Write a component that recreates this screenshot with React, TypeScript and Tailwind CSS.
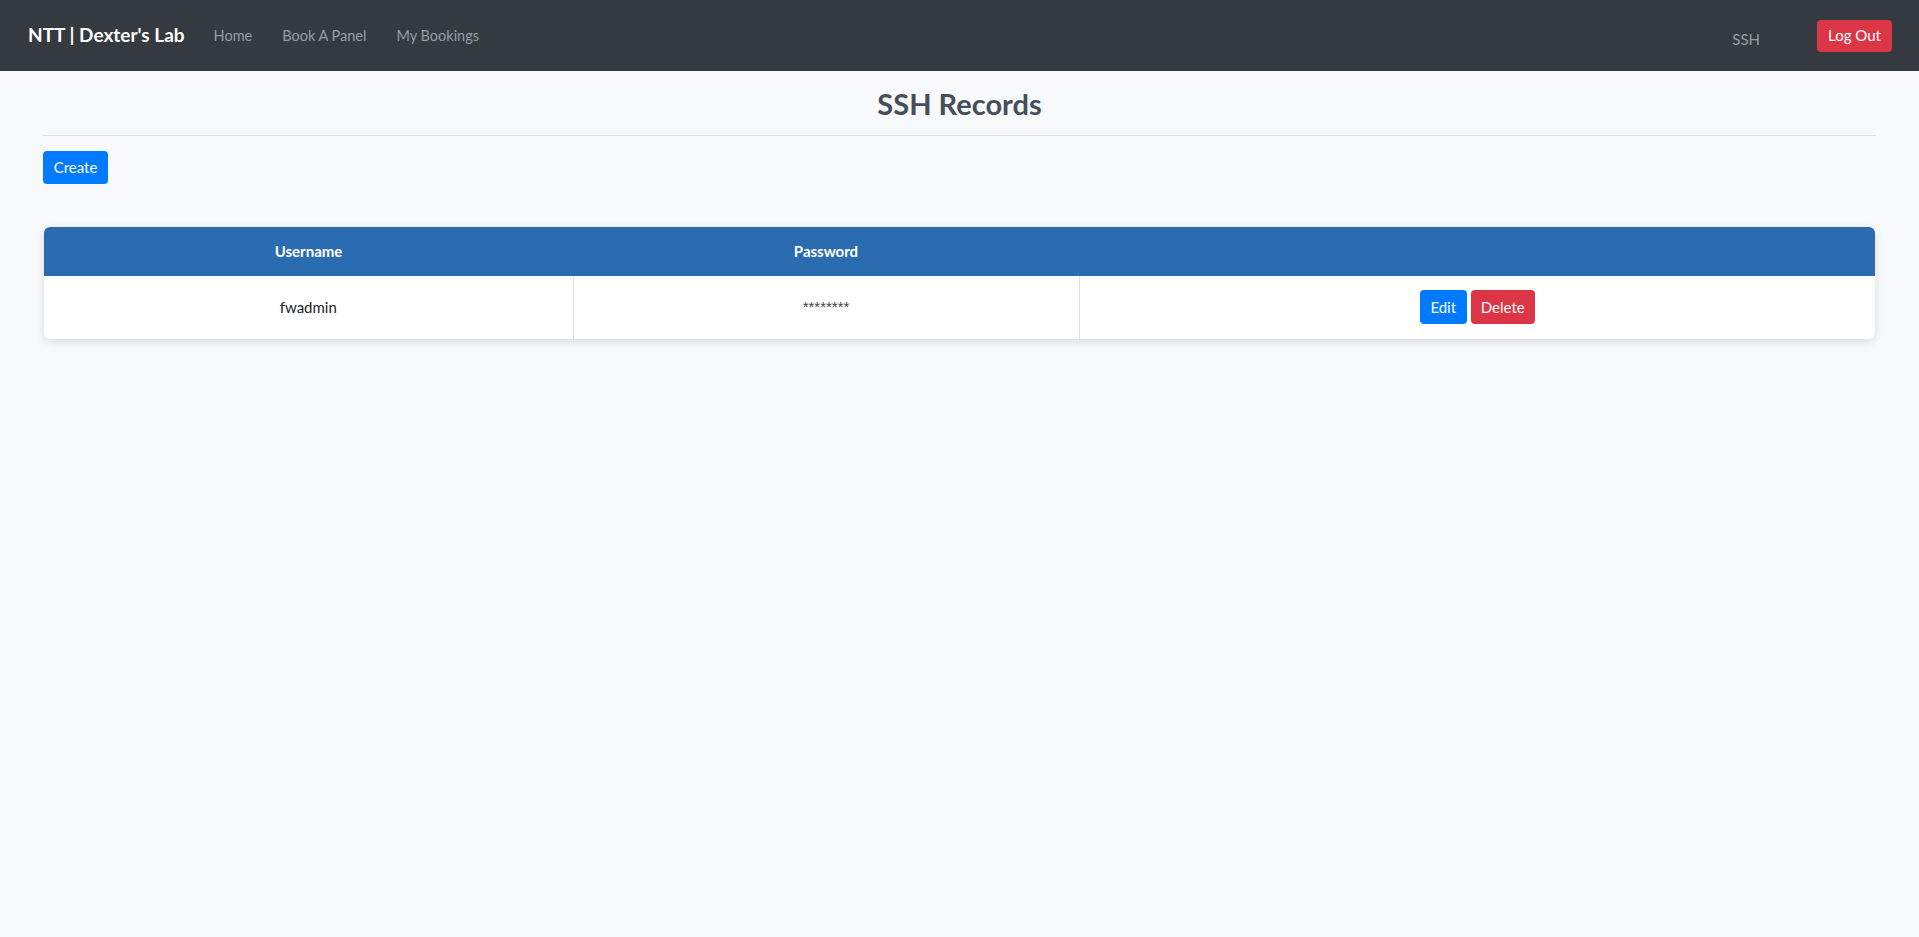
import React from 'react';

const navLinks = ['Home', 'Book A Panel', 'My Bookings'];

const records = [{ id: 1, username: 'fwadmin', password: '********' }];

const Navbar = () => (
    <nav className="h-[71px] bg-[#343a40] flex items-center pl-[28px] pr-[27px]">
        <span className="text-white font-bold text-[19px] mr-[14px]">NTT | Dexter's Lab</span>
        {navLinks.map(link => (
            <a key={link} href="#" className="px-[15px] text-[14.5px] text-[#9a9da0] hover:text-white">
                {link}
            </a>
        ))}
        <div className="ml-auto flex items-center">
            <span className="text-[15px] text-[#9a9da0] mt-[8px] mr-[57px]">SSH</span>
            <button className="h-[32px] w-[75px] rounded-[4px] bg-[#dc3545] text-white text-[15px]">Log Out</button>
        </div>
    </nav>
);

const SshTable = () => (
    <div className="rounded-[6px] overflow-hidden shadow-[0_3px_10px_rgba(0,0,0,0.12)] bg-white">
        <table className="w-full border-collapse text-[15px]">
            <thead>
                <tr className="bg-[#2b6cb0] text-white h-[49px]">
                    <th className="font-bold w-[529px]">Username</th>
                    <th className="font-bold w-[506px]">Password</th>
                    <th></th>
                </tr>
            </thead>
            <tbody>
                {records.map(r => (
                    <tr key={r.id} className="h-[63px] text-[#212529]">
                        <td className="text-center">{r.username}</td>
                        <td className="text-center border-x border-[#dee2e6] font-['Liberation_Sans',sans-serif] text-[#444]">{r.password}</td>
                        <td className="text-center">
                            <div className="flex justify-center gap-[4px]">
                                <button className="h-[34px] w-[47px] rounded-[4px] bg-[#007bff] text-white text-[15px]">Edit</button>
                                <button className="h-[34px] w-[64px] rounded-[4px] bg-[#dc3545] text-white text-[15px]">Delete</button>
                            </div>
                        </td>
                    </tr>
                ))}
            </tbody>
        </table>
    </div>
);

export default function App() {
    return (
        <div className="min-h-[937px] bg-[#f8f9fa] font-['Lato',sans-serif]">
            <Navbar />
            <main className="px-[43px]">
                <h2 className="text-center font-bold text-[29px] text-[#454f5b] pt-[11px] pb-[9px] border-b border-[#dee2e6]">
                    SSH Records
                </h2>
                <button className="mt-[15px] h-[33px] w-[65px] rounded-[4px] bg-[#007bff] text-white text-[15px]">Create</button>
                <div className="mt-[43px] mx-[1px]">
                    <SshTable />
                </div>
            </main>
        </div>
    );
}
